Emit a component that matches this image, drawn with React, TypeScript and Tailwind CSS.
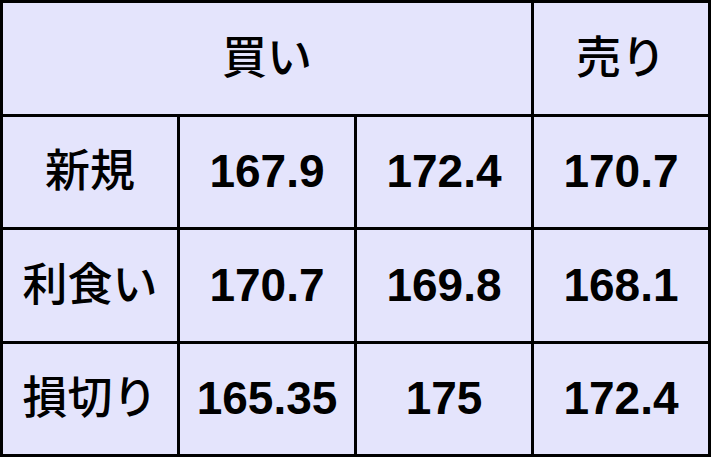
const rows = [
  { label: '新規', values: ['167.9', '172.4', '170.7'] },
  { label: '利食い', values: ['170.7', '169.8', '168.1'] },
  { label: '損切り', values: ['165.35', '175', '172.4'] },
];

const jp = "font-['Liberation_Sans','Noto_Sans_CJK_JP',sans-serif]";

function Cell({ children, className = '' }: { children: React.ReactNode; className?: string }) {
  return (
    <div className={`flex items-center justify-center bg-[#e4e4fc] text-black ${className}`}>
      {children}
    </div>
  );
}

export default function App() {
  return (
    <div className={`w-[711px] h-[457px] grid grid-cols-4 grid-rows-4 gap-[3px] p-[3px] bg-black ${jp}`}>
      <Cell className="col-span-3 text-[45px] font-medium">買い</Cell>
      <Cell className="text-[45px] font-medium">売り</Cell>
      {rows.map((row) => (
        <>
          <Cell key={row.label} className="text-[45px] font-medium">
            {row.label}
          </Cell>
          {row.values.map((v, i) => (
            <Cell key={row.label + i} className="text-[46px] font-bold">
              {v}
            </Cell>
          ))}
        </>
      ))}
    </div>
  );
}
